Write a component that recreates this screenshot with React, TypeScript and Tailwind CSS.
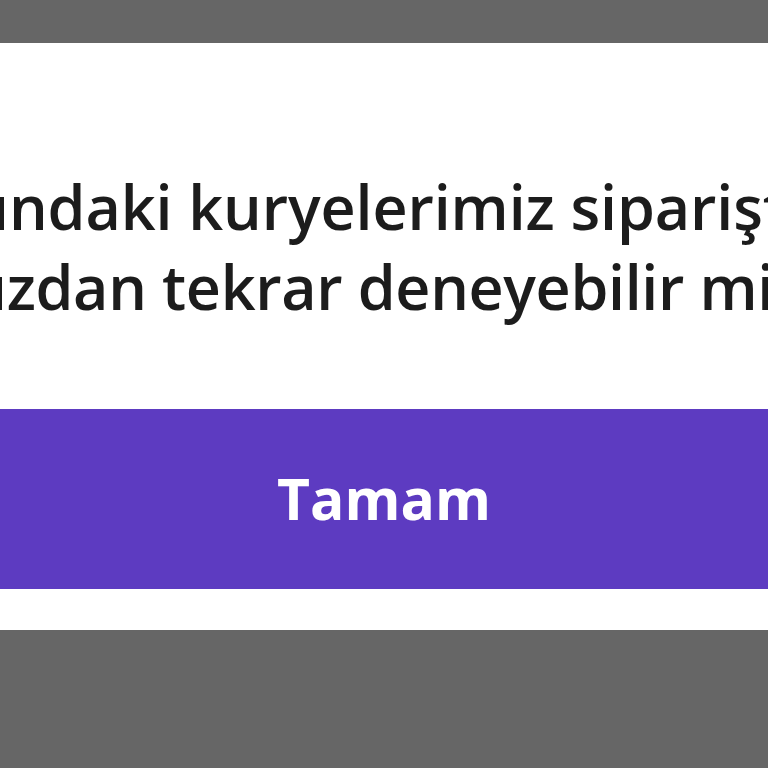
export default function App() {
  return (
    <div
      className="w-[768px] h-[768px] bg-[#666666] overflow-hidden flex flex-col"
      style={{ fontFamily: '"Open Sans", "Noto Sans", sans-serif' }}
    >
      <div className="h-[43px] shrink-0" />
      <div className="bg-white h-[587px] shrink-0 flex flex-col overflow-hidden">
        <div className="pt-[124px] h-[366px] shrink-0 overflow-hidden text-[61px] leading-[80px] font-semibold text-[#1c1c1c] whitespace-nowrap">
          <div className="ml-[-8px] tracking-[-0.1px]">ındaki kuryelerimiz siparişte</div>
          <div className="ml-[-10px] tracking-[-0.35px]">ızdan tekrar deneyebilir misiniz?</div>
        </div>
        <button className="h-[180px] shrink-0 w-full bg-[#5d3bc1] text-white text-[57px] font-bold flex items-center justify-center">
          Tamam
        </button>
      </div>
    </div>
  );
}
